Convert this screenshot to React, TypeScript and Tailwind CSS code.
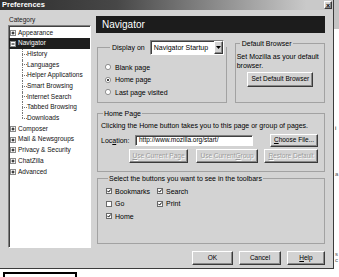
import React from "react";

const raised =
  "border border-t-white border-l-white border-r-[#3a3a3a] border-b-[#3a3a3a] shadow-[inset_-1px_-1px_0_#8a8a8a] bg-[#d3d3d3]";
const sunken =
  "border border-t-[#808080] border-l-[#808080] border-r-white border-b-white shadow-[inset_1px_1px_0_#404040]";
const disabled = "text-[#9c9c9c] [text-shadow:1px_1px_0_#ffffff]";

function Btn({ children, w, off }: { children: React.ReactNode; w: string; off?: boolean }) {
  return (
    <div
      className={`${raised} ${w} h-full flex items-center justify-center whitespace-nowrap text-[6.5px] ${
        off ? disabled : "text-black"
      }`}
    >
      {children}
    </div>
  );
}

function Expander({ open }: { open?: boolean }) {
  return (
    <svg width="6" height="6" viewBox="0 0 6 6" className="shrink-0">
      <rect x="0.5" y="0.5" width="5" height="5" fill="#ffffff" stroke="#8a8a8a" />
      <line x1="1.5" y1="3" x2="4.5" y2="3" stroke="#000" />
      {!open && <line x1="3" y1="1.5" x2="3" y2="4.5" stroke="#000" />}
    </svg>
  );
}

function Radio({ on }: { on?: boolean }) {
  return (
    <svg width="6" height="6" viewBox="0 0 6 6" className="shrink-0">
      <circle cx="3" cy="3" r="2.6" fill="#ffffff" stroke="#7a7a7a" strokeWidth="0.8" />
      {on && <circle cx="3" cy="3" r="1" fill="#000" />}
    </svg>
  );
}

function Check({ on }: { on?: boolean }) {
  return (
    <svg width="6" height="6" viewBox="0 0 6 6" className="shrink-0">
      <rect x="0.5" y="0.5" width="5" height="5" fill="#ffffff" stroke="#6a6a6a" />
      {on && <path d="M1.4 2.8 L2.6 4.1 L4.7 1.5" fill="none" stroke="#000" strokeWidth="1" />}
    </svg>
  );
}

const children = [
  "History",
  "Languages",
  "Helper Applications",
  "Smart Browsing",
  "Internet Search",
  "Tabbed Browsing",
  "Downloads",
];
const after = ["Composer", "Mail & Newsgroups", "Privacy & Security", "ChatZilla", "Advanced"];

function TopRow({ label, open, selected }: { label: string; open?: boolean; selected?: boolean }) {
  return (
    <div className={`h-[10.7px] flex items-center gap-[2px] pl-[1px] ${selected ? "bg-[#1e1e1e] text-white" : ""}`}>
      <Expander open={open} />
      <span>{label}</span>
    </div>
  );
}

export default function App() {
  return (
    <div className="w-[339px] h-[277px] overflow-hidden bg-white font-['Liberation_Sans',Arial,sans-serif] text-[6.5px] leading-none text-black whitespace-nowrap">
      <div className="flex">
        {/* dialog */}
        <div className="w-[334px] h-[269px] bg-[#d3d3d3] border-r border-b border-[#3c3c3c] flex flex-col">
          {/* title bar */}
          <div className="h-[10px] flex items-center justify-between pl-[2px] pr-[1px] bg-[linear-gradient(to_right,#2e2e2e_0%,#474747_35%,#c9c9c9_92%)]">
            <span className="text-white font-bold text-[7.5px]">Preferences</span>
            <div className={`${raised} w-[8px] h-[8px] flex items-center justify-center text-[7px] font-bold`}>×</div>
          </div>

          <div className="flex pl-[8px] pt-[5px]">
            {/* category column */}
            <div className="w-[83px]">
              <div className="h-[10px] flex items-center pl-[1px] text-[#1a1a1a]">Category</div>
              <div className={`h-[223px] bg-white ${sunken} pt-[1.5px] text-[#111]`}>
                <TopRow label="Appearance" />
                <TopRow label="Navigator" open selected />
                {children.map((c, i) => (
                  <div key={c} className="h-[10.7px] flex items-center pl-[13px]">
                    <span className="flex flex-col w-[5px] h-full">
                      <span className="flex-1 border-l border-dotted border-[#777]" />
                      <span
                        className={`flex-1 border-t border-dotted border-[#777] ${
                          i < children.length - 1 ? "border-l" : ""
                        }`}
                      />
                    </span>
                    <span>{c}</span>
                  </div>
                ))}
                {after.map((a) => (
                  <TopRow key={a} label={a} />
                ))}
              </div>
            </div>

            {/* main panel */}
            <div className="w-[229px] ml-[5px] mt-[1px] text-[7px]">
              <div className="h-[17px] bg-[#1c1c1c] flex items-center pl-[6px] text-white text-[10px]">Navigator</div>

              <div className="flex mt-[6px] h-[64px] pl-[1px] gap-[8px]">
                <fieldset className="w-[126px] mt-[1px] border border-[#a2a2a2] pl-[7px]">
                  <legend className="ml-[5px] px-[2px] bg-[#d3d3d3]">
                    <div className="flex items-center gap-[5px]">
                      <span>Display on</span>
                      <div className={`w-[74px] h-[15px] bg-white ${sunken} flex items-center justify-between pl-[3px]`}>
                        <span>Navigator Startup</span>
                        <div className={`${raised} w-[9px] h-full flex items-center justify-center`}>
                          <svg width="5" height="3" viewBox="0 0 5 3">
                            <path d="M0 0 H5 L2.5 3 Z" fill="#000" />
                          </svg>
                        </div>
                      </div>
                    </div>
                  </legend>
                  <div className="pt-[6px]">
                    {[
                      ["Blank page", false],
                      ["Home page", true],
                      ["Last page visited", false],
                    ].map(([t, on]) => (
                      <div key={t as string} className="h-[12.5px] flex items-center gap-[4px]">
                        <Radio on={on as boolean} />
                        <span>{t}</span>
                      </div>
                    ))}
                  </div>
                </fieldset>

                <fieldset className="w-[94px] border border-[#a2a2a2] pl-[1px]">
                  <legend className="ml-[3px] px-[2px] h-[8px] flex items-center">Default Browser</legend>
                  <p className="mt-[6px] leading-[8.5px]">
                    Set Mozilla as your default
                    <br />
                    browser.
                  </p>
                  <div className="mt-[2px] h-[15px] flex justify-center">
                    <Btn w="w-[66px]">Set Default Browser</Btn>
                  </div>
                </fieldset>
              </div>

              <fieldset className="mt-[6px] ml-[1px] h-[63px] border border-[#a2a2a2] pl-[3px]">
                <legend className="ml-[2px] px-[1px] h-[8px] flex items-center">Home Page</legend>
                <div className="mt-[4px] h-[8px] flex items-center">
                  Clicking the Home button takes you to this page or group of pages.
                </div>
                <div className="mt-[5px] h-[13px] flex items-center">
                  <span className="w-[34px]">
                    Loc<span className="underline">a</span>tion:
                  </span>
                  <div className={`w-[118px] h-[11px] bg-white ${sunken} flex items-center pl-[3px] text-[6.5px]`}>
                    http://www.mozilla.org/start/
                  </div>
                  <div className="ml-[17px] h-full flex">
                    <Btn w="w-[48px]">
                      <span className="underline">C</span>hoose File...
                    </Btn>
                  </div>
                </div>
                <div className="mt-[2px] h-[14px] flex ml-[28px] gap-[8px]">
                  <Btn w="w-[59px]" off>
                    <span className="underline">U</span>se Current Page
                  </Btn>
                  <Btn w="w-[62px]" off>
                    Use Current <span className="underline">G</span>roup
                  </Btn>
                  <div className="-ml-[2px] h-full flex">
                    <Btn w="w-[54px]" off>
                      <span className="underline">R</span>estore Default
                    </Btn>
                  </div>
                </div>
              </fieldset>

              <fieldset className="mt-[2px] ml-[1px] h-[70px] border border-[#a2a2a2] pl-[8px]">
                <legend className="ml-[2px] px-[1px] h-[8px] flex items-center">
                  Select the buttons you want to see in the toolbars
                </legend>
                <div className="mt-[3px] grid grid-cols-[51px_auto]">
                  {[
                    ["Bookmarks", true],
                    ["Search", true],
                    ["Go", false],
                    ["Print", true],
                    ["Home", true],
                  ].map(([t, on]) => (
                    <div key={t as string} className="h-[12.5px] flex items-center gap-[3px]">
                      <Check on={on as boolean} />
                      <span>{t}</span>
                    </div>
                  ))}
                </div>
              </fieldset>
            </div>
          </div>

          {/* dialog buttons */}
          <div className="mt-[3px] h-[14px] flex justify-end gap-[6px] pr-[8px]">
            <Btn w="w-[41px]">OK</Btn>
            <Btn w="w-[42px]">Cancel</Btn>
            <Btn w="w-[38px]">
              <span className="underline">H</span>elp
            </Btn>
          </div>
        </div>

        {/* page behind, right edge */}
        <div className="w-[5px] h-[269px] flex flex-col text-[6px] text-[#555] overflow-hidden">
          <div className="h-[29px] bg-[#c4c4c4]" />
          <div className="h-[96px]" />
          <div className="pl-[1px] text-black">i</div>
          <div className="h-[40px]" />
          <div className="pl-[1px]">a</div>
          <div className="h-[74px]" />
          <div className="pl-[1px]">s</div>
          <div className="pl-[1px]">c</div>
        </div>
      </div>

      {/* page behind, bottom edge */}
      <div className="h-[8px] flex items-end pl-[3px]">
        <div className="w-[74px] h-[5px] border-t-2 border-x-2 border-black" />
      </div>
    </div>
  );
}
